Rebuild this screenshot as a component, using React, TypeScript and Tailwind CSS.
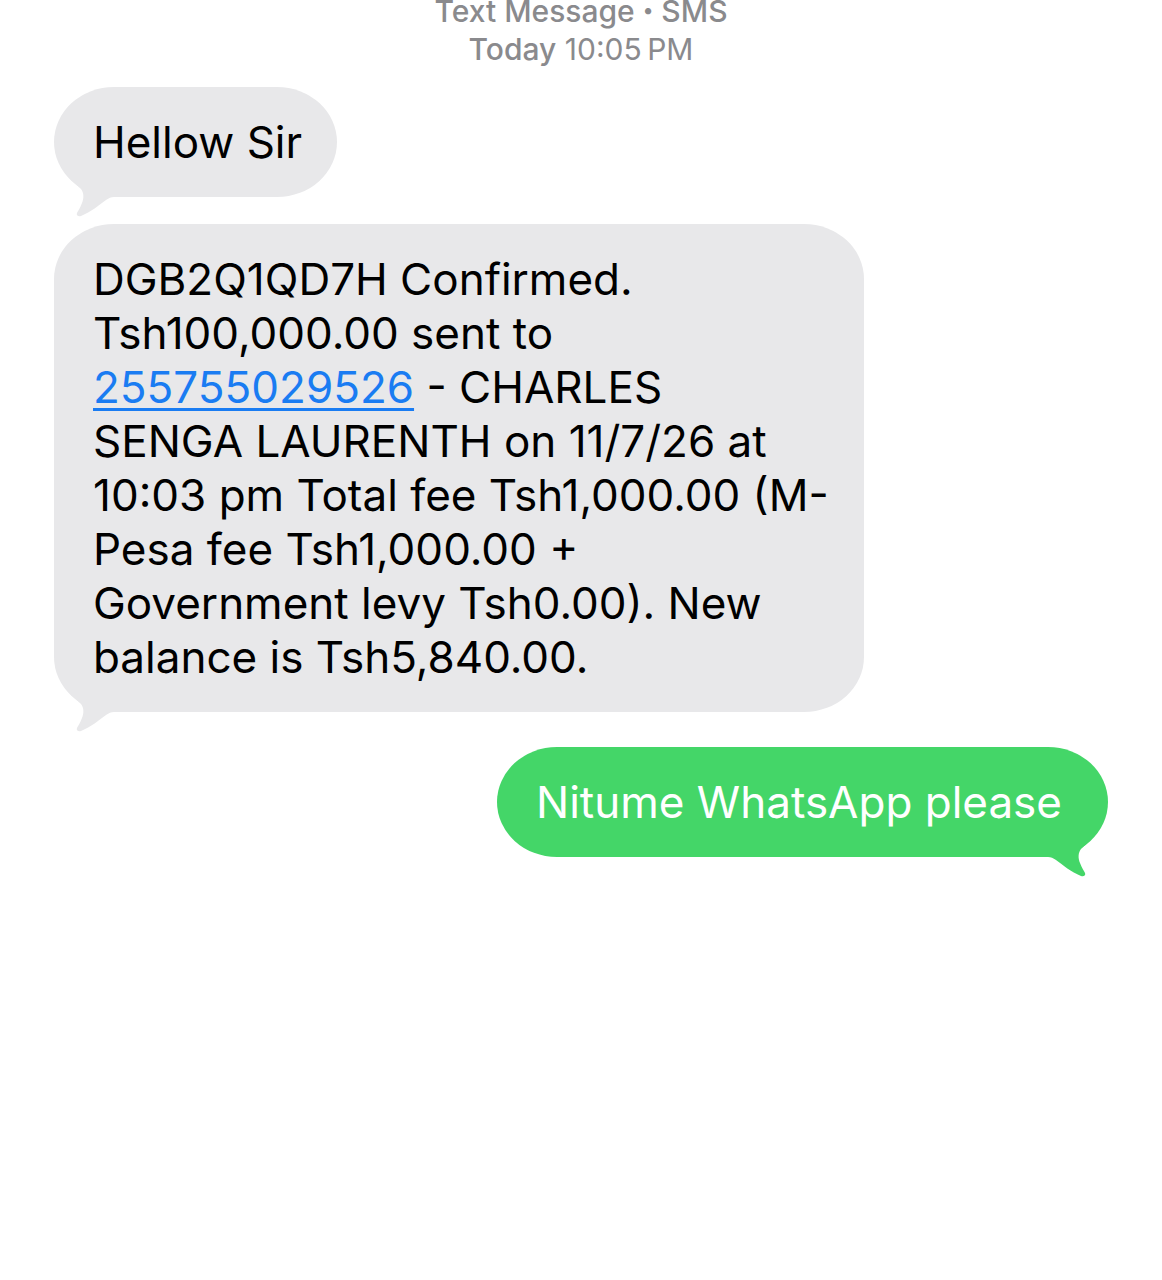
import type { ReactNode } from "react";
import clsx from "clsx";

type Message = {
  id: number;
  sent?: boolean;
  body: ReactNode;
};

const messages: Message[] = [
  { id: 1, body: "Hellow Sir" },
  {
    id: 2,
    body: (
      <>
        DGB2Q1QD7H Confirmed.
        <br />
        Tsh100,000.00 sent to
        <br />
        <a
          href="tel:255755029526"
          className="text-[#1a7cf2] underline decoration-[3px] underline-offset-[5px] [text-decoration-skip-ink:none]"
        >
          255755029526
        </a>{" "}
        - CHARLES
        <br />
        SENGA LAURENTH on 11/7/26 at
        <br />
        10:03 pm Total fee Tsh1,000.00 (M-
        <br />
        Pesa fee Tsh1,000.00 +
        <br />
        Government levy Tsh0.00). New
        <br />
        balance is Tsh5,840.00.
      </>
    ),
  },
  { id: 3, sent: true, body: "Nitume WhatsApp please" },
];

function Tail({ sent }: { sent?: boolean }) {
  return (
    <svg
      viewBox="0 0 48 44"
      aria-hidden="true"
      className={clsx(
        "absolute -bottom-5 h-11 w-12 fill-current",
        sent ? "right-3 -scale-x-100" : "left-3",
      )}
    >
      <path d="M4 5 C8 10 12 13 15 16 C18 20 18 25 16 30 C14 35 12 38 11 40 C10 42 12 44 15 43 C25 39 33 32 40 27 C43 25 45 24 48 24 L48 5 Z" />
    </svg>
  );
}

function Bubble({ sent, body }: Omit<Message, "id">) {
  return (
    <li
      className={clsx(
        "relative rounded-[60px/55px] py-7 pl-[39px]",
        sent
          ? "mt-[35px] self-end bg-[#44d668] pr-[46px] text-[#44d668]"
          : "mt-[27px] self-start bg-[#e8e8ea] pr-[35px] text-[#e8e8ea]",
      )}
    >
      <Tail sent={sent} />
      <p
        className={clsx(
          "relative text-[44px] leading-[54px]",
          sent ? "text-white" : "text-black",
        )}
      >
        {body}
      </p>
    </li>
  );
}

export default function App() {
  return (
    <main className="min-h-screen bg-white px-[54px] font-['Inter',sans-serif]">
      <header className="text-center text-[30px] leading-[22px] text-[#8a8a8d]">
        <p className="font-medium">
          Text Message <span className="align-[5px] text-xl leading-none">•</span> SMS
        </p>
        <p className="mt-4">
          <span className="font-medium">Today</span> 10:05{"\u2009"}PM
        </p>
      </header>
      <ul className="flex flex-col">
        {messages.map((message) => (
          <Bubble key={message.id} sent={message.sent} body={message.body} />
        ))}
      </ul>
    </main>
  );
}
